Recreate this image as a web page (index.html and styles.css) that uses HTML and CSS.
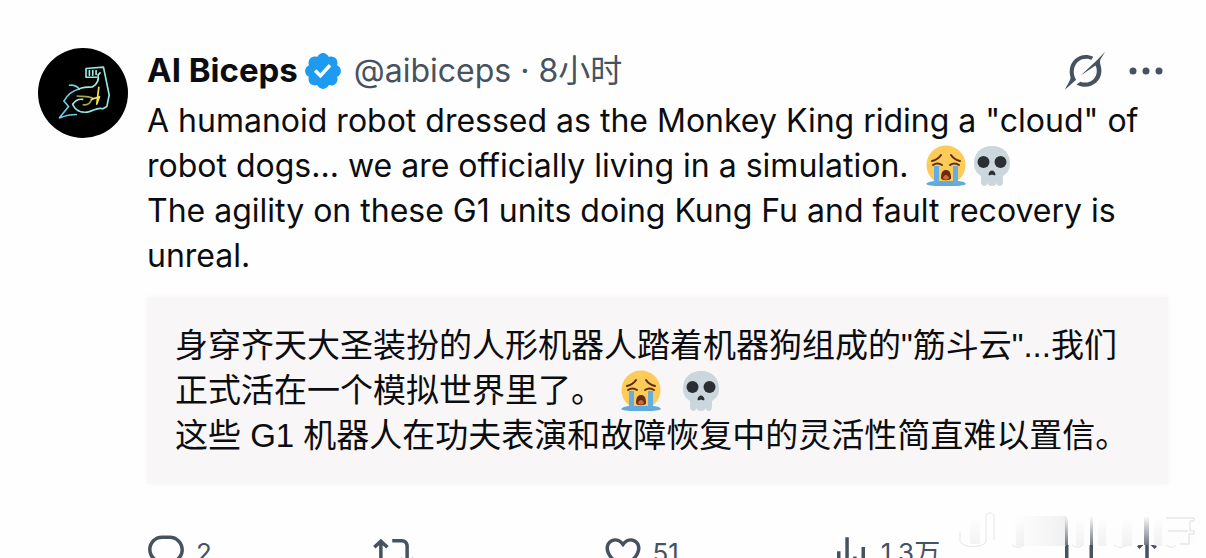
FILE: index.html
```html
<!DOCTYPE html>
<html lang="en">
<head>
<meta charset="utf-8">
<title>AI Biceps</title>
<link rel="stylesheet" href="styles.css">
</head>
<body>
<svg class="defs" aria-hidden="true">
  <symbol id="cry" viewBox="0 0 42 42">
    <circle cx="21" cy="20" r="19.5" fill="#fdcb58"/>
    <path d="M1 39c3-3 8-3 10-3h20c3 0 8 0 10 3-3 2-9 2-20 2S4 41 1 39z" fill="#5fa9dc"/>
    <path d="M9 21h5v18H9zM28 21h5v18h-5z" fill="#62aee3"/>
    <path d="M7 16c4-1 7-3 9-6M26 10c2 3 5 5 9 6M8 20c3-2 6-2 9 0M25 20c3-2 6-2 9 0" fill="none" stroke="#5c2b14" stroke-width="2" stroke-linecap="round"/>
    <path d="M16 33c0-6 2-8 5-8s5 2 5 8c0 3-10 3-10 0z" fill="#6b2a14"/>
    <path d="M18 33c1-4 5-4 6 0-1 2-5 2-6 0z" fill="#d1693c"/>
  </symbol>
  <symbol id="skull" viewBox="0 0 38 42">
    <path d="M19 1C8 1 1 8 1 18c0 6 2 10 7 13v6c0 5 6 5 6.500 1 .5 4 8.500 4 9 0 .5 4 6.500 4 6.500-1v-6c5-3 7-7 7-13C37 8 30 1 19 1z" fill="#ccd6dd"/>
    <circle cx="10.500" cy="17" r="6" fill="#292f33"/>
    <circle cx="27.500" cy="17" r="6" fill="#292f33"/>
    <path d="M15.500 30c0-3 2-4.500 3.500-4.500s3.500 1.500 3.500 4.500c-1.500 1-2.500-.5-3.500-.5s-2 1.500-3.500.5z" fill="#292f33"/>
  </symbol>
</svg>

<article class="post">
  <a class="avatar" href="#profile" aria-label="AI Biceps">
    <svg viewBox="25 25 268 268" aria-hidden="true">
      <circle cx="159" cy="159" r="134"/>
      <g fill="none" stroke-width="5" stroke-linejoin="round" stroke-linecap="round">
        <path stroke="#8ee9e0" d="M200 112h-32V86l52-4 17 83-7 34-12 7c-18-6-28 8-46 10-20 2-38-6-44-24"/>
        <path stroke="#6fcbe8" d="M119 136c12-2 22 3 29 11-26 6-38 22-46 36l14 16-27 34c16-6 28-10 50-10"/>
        <path stroke="#a8e6dc" d="M147 147c14-6 26-6 40-6 14-8 20-20 17-36l6-6M178 92v14M188 92v14M198 92v12M130 190c8-10 16-14 28-12"/>
        <path stroke="#a7a655" d="M142 168c18 2 30 0 46 6M160 194c14 2 20-4 24-14"/>
        <path stroke="#efe34f" d="M206 142l-6 50M184 178l24-8-8 22"/>
      </g>
    </svg>
  </a>

  <div class="main">
    <header class="head">
      <a class="name" href="#profile">AI Biceps</a>
      <svg class="badge" viewBox="0 0 22 22" role="img" aria-label="Verified"><path d="M20.396 11c-.018-.646-.215-1.275-.57-1.816-.354-.54-.852-.972-1.438-1.246.223-.607.27-1.264.14-1.897-.131-.634-.437-1.218-.882-1.687-.47-.445-1.053-.75-1.687-.882-.633-.13-1.29-.083-1.897.14-.273-.587-.704-1.086-1.245-1.44S11.647 1.62 11 1.604c-.646.017-1.273.213-1.813.568s-.969.854-1.24 1.44c-.608-.223-1.267-.272-1.902-.14-.635.13-1.22.436-1.69.882-.445.47-.749 1.055-.878 1.688-.13.633-.08 1.29.144 1.896-.587.274-1.087.705-1.443 1.245-.356.54-.555 1.17-.574 1.817.02.647.218 1.276.574 1.817.356.54.856.972 1.443 1.245-.224.606-.274 1.263-.144 1.896.13.634.433 1.218.877 1.688.47.443 1.054.747 1.687.878.633.132 1.29.084 1.897-.136.274.586.705 1.084 1.246 1.439.54.354 1.17.551 1.816.569.647-.016 1.276-.213 1.817-.567s.972-.854 1.245-1.44c.604.239 1.266.296 1.903.164.636-.132 1.22-.447 1.68-.907.46-.46.776-1.044.908-1.681s.075-1.299-.165-1.903c.586-.274 1.084-.705 1.439-1.246.354-.54.551-1.17.569-1.816zM9.662 14.85l-3.429-3.428 1.293-1.302 2.072 2.072 4.4-4.794 1.347 1.246z"/></svg>
      <span class="meta"><a href="#profile">@aibiceps</a> · <a href="#status">8<span lang="zh">小时</span></a></span>
      <button class="tool" type="button" aria-label="Grok">
        <svg class="grok" viewBox="75 32 129 124" aria-hidden="true">
          <path d="M165 50c-34-18-74 8-73 46 0 12 4 17 2 23-3 9-10 20-17 33l35-31c-18-30 0-66 32-65 8 0 12 2 15 4z"/>
          <path d="M201 35c-6 12-15 21-15 31 0 10 6 16 4 33-3 34-42 56-77 37l12-9c26 10 52-8 51-34 0-8-2-12-4-16l-46 31 49-46z"/>
        </svg>
      </button>
      <button class="tool" type="button" aria-label="More">
        <svg class="more" viewBox="0 0 34 8" aria-hidden="true"><circle cx="4" cy="4" r="3.500"/><circle cx="17" cy="4" r="3.500"/><circle cx="30" cy="4" r="3.500"/></svg>
      </button>
    </header>

    <p class="text">A humanoid robot dressed as the Monkey King riding a "cloud" of<br>
      robot dogs... we are officially living in a simulation. <svg class="emoji" role="img" aria-label="Loudly crying face"><use href="#cry"/></svg><svg class="emoji after" role="img" aria-label="Skull"><use href="#skull"/></svg><br>
      The agility on these G1 units doing Kung Fu and fault recovery is<br>
      unreal.</p>

    <blockquote class="translation" lang="zh-CN">
      身穿齐天大圣装扮的人形机器人踏着机器狗组成的"筋斗云"...我们<br>
      正式活在一个模拟世界里了。 <svg class="emoji" role="img" aria-label="放声大哭"><use href="#cry"/></svg><svg class="emoji spaced" role="img" aria-label="骷髅"><use href="#skull"/></svg><br>
      这些 G1 机器人在功夫表演和故障恢复中的灵活性简直难以置信。
    </blockquote>

    <footer class="actions">
      <button type="button" aria-label="Reply"><svg viewBox="0 0 24 24" aria-hidden="true"><path d="M1.751 10c0-4.420 3.584-8 8.005-8h4.366c4.490 0 8.129 3.640 8.129 8.130 0 2.960-1.607 5.680-4.196 7.110l-8.054 4.460v-3.690h-.067c-4.490.1-8.183-3.510-8.183-8.010zm8.005-6c-3.317 0-6.005 2.690-6.005 6 0 3.370 2.770 6.080 6.138 6.010l.351-.01h1.761v2.300l5.087-2.810c1.951-1.080 3.163-3.130 3.163-5.360 0-3.390-2.744-6.130-6.129-6.130H9.756z"/></svg>2</button>
      <button type="button" aria-label="Repost"><svg viewBox="0 0 24 24" aria-hidden="true"><path d="M4.500 3.880l4.432 4.140-1.364 1.460L5.500 7.550V16c0 1.100.896 2 2 2H13v2H7.500c-2.209 0-4-1.790-4-4V7.550L1.432 9.480.068 8.020 4.500 3.880zM16.500 6H11V4h5.500c2.209 0 4 1.790 4 4v8.450l2.068-1.930 1.364 1.460-4.432 4.140-4.432-4.140 1.364-1.460 2.068 1.930V8c0-1.100-.896-2-2-2z"/></svg></button>
      <button type="button" aria-label="Like"><svg viewBox="0 0 24 24" aria-hidden="true"><path d="M16.697 5.500c-1.222-.06-2.679.51-3.890 2.160l-.805 1.090-.806-1.090C9.984 6.010 8.526 5.440 7.304 5.500c-1.243.07-2.349.78-2.910 1.910-.552 1.120-.633 2.780.479 4.820 1.074 1.970 3.257 4.270 7.129 6.610 3.870-2.340 6.052-4.640 7.126-6.610 1.111-2.040 1.030-3.700.477-4.820-.561-1.130-1.666-1.840-2.908-1.910zm4.187 7.690c-1.351 2.480-4.001 5.120-8.379 7.670l-.503.3-.504-.3c-4.379-2.550-7.029-5.190-8.382-7.670-1.360-2.500-1.410-4.860-.514-6.670.887-1.790 2.647-2.910 4.601-3.010 1.651-.09 3.368.56 4.798 2.010 1.429-1.450 3.146-2.100 4.796-2.010 1.954.1 3.714 1.220 4.601 3.010.896 1.810.846 4.170-.514 6.670z"/></svg>51</button>
      <button type="button" aria-label="Views"><svg viewBox="0 0 24 24" aria-hidden="true"><path d="M8.750 21V3h2v18h-2zM18 21V8.500h2V21h-2zM4 21l.004-10h2L6 21H4zm9.248 0v-7h2v7h-2z"/></svg><span lang="zh">1.3万</span></button>
      <div class="pair">
        <button type="button" aria-label="Bookmark"><svg viewBox="0 0 24 24" aria-hidden="true"><path d="M4 4.500C4 3.120 5.119 2 6.500 2h11C18.881 2 20 3.120 20 4.500v18.440l-8-5.710-8 5.710V4.500zM6.500 4c-.276 0-.5.220-.5.500v14.560l6-4.290 6 4.290V4.500c0-.280-.224-.500-.500-.500h-11z"/></svg></button>
        <button type="button" aria-label="Share"><svg viewBox="0 0 24 24" aria-hidden="true"><path d="M12 2.590l5.700 5.700-1.410 1.420L13 6.410V16h-2V6.410l-3.300 3.300-1.410-1.420L12 2.590zM21 15l-.02 3.510c0 1.380-1.120 2.490-2.500 2.490H5.500C4.110 21 3 19.880 3 18.500V15h2v3.500c0 .280.220.500.500.500h12.980c.280 0 .500-.220.500-.500L19 15h2z"/></svg></button>
        <svg class="watermark" viewBox="0 0 240 38" aria-hidden="true">
          <defs>
            <linearGradient id="ink" x2="0" y2="1"><stop offset="0" stop-color="#35414d" stop-opacity="0"/><stop offset="1" stop-color="#35414d" stop-opacity=".7"/></linearGradient>
            <linearGradient id="mist" x2="0" y2="1"><stop offset="0" stop-color="#ddd" stop-opacity="0"/><stop offset="1" stop-color="#ddd" stop-opacity=".35"/></linearGradient>
            <linearGradient id="fog"><stop offset="0" stop-color="#eee" stop-opacity="0"/><stop offset="1" stop-color="#e6e6e6"/></linearGradient>
          </defs>
          <path d="M95 16h143v17H95z" fill="#fdfdfd"/>
          <path d="M52 4h56v30H52z" fill="url(#fog)" opacity=".6"/>
          <path d="M12 6h10v26H12zM58 8h8v26h-8zM118 8h8v26h-8zM140 8h8v26h-8zM164 8h10v26h-10zM196 8h8v26h-8z" fill="url(#mist)"/>
          <path d="M107 4h3v29h-3zM132 4h3v29h-3zM186 4h5v29h-5z" fill="url(#ink)"/>
          <g fill="none" stroke="#e6e6e6">
            <path d="M2 20v10c4 6 22 6 26 0V4c0-4 8-4 8 0v24M54 33c4 3 10 3 12 0M114 33c4 3 8 3 10 0M156 33c4 3 10 3 12 0M208 33c4 3 8 3 10 0"/>
            <path d="M208 6h28v3h-4v10h4v3h-5v10h-9M210 19h20" stroke="#ddd"/>
          </g>
        </svg>
      </div>
    </footer>
  </div>
</article>
</body>
</html>
```
FILE: styles.css
```css
* { box-sizing: border-box; }

html, body { height: 100%; }

body {
  margin: 0;
  overflow: hidden;
  background: #fefefe;
  color: #0b0d10;
  font: 32px/45px Inter, "Noto Sans CJK SC", sans-serif;
}

a { color: inherit; text-decoration: none; }

button {
  padding: 0;
  border: 0;
  background: none;
  color: inherit;
  font: inherit;
  cursor: pointer;
}

svg { display: block; fill: currentColor; }

.defs { position: absolute; width: 0; height: 0; }

.post {
  display: flex;
  gap: 19px;
  padding: 48px 38px 0;
}

.avatar { flex: none; width: 90px; height: 90px; color: #000; }

.main { flex: 1; min-width: 0; }

.head {
  display: flex;
  align-items: center;
  height: 45px;
  margin-bottom: 5px;
  color: #46525f;
}

.name { color: #0b0d10; font-size: 33px; font-weight: 700; }

.badge { width: 42px; height: 42px; margin: 0 10px 0 4px; color: #1d9bf0; }

.meta { margin-right: auto; white-space: nowrap; }

.tool { margin-right: 5px; }

.grok { width: 42px; height: 40px; margin-right: 18px; }

.more { width: 34px; height: 8px; }

.text { margin: 0; white-space: nowrap; }

.emoji {
  display: inline-block;
  width: 42px;
  height: 42px;
  margin: -4px 0 0 7px;
  vertical-align: middle;
}

.after { margin-left: 4px; }

.spaced { margin-left: 18px; }

.translation {
  margin: 19px 0 0;
  padding: 26px 28px;
  background: #f9f6f7;
  box-shadow: 0 0 6px #f9f6f7;
  font: 33px/45px "Liberation Sans", "Noto Sans CJK SC", sans-serif;
  white-space: nowrap;
}

.actions {
  display: grid;
  grid-template-columns: repeat(4, 1fr) auto;
  align-items: center;
  margin: 46px 0 0 -2px;
  color: #46525f;
  font-size: 26px;
}

.actions button { display: flex; align-items: center; gap: 9px; }

.actions button svg { width: 42px; height: 42px; }

.pair { position: relative; display: flex; gap: 26px; }

.watermark {
  position: absolute;
  right: -30px;
  bottom: 24px;
  width: 240px;
  height: 38px;
  pointer-events: none;
}
```
